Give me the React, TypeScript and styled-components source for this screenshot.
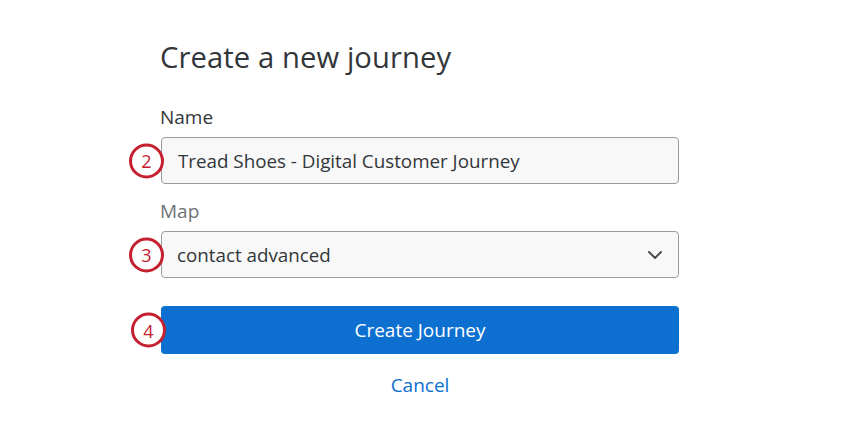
import React from "react";
import styled, { createGlobalStyle } from "styled-components";

const Global = createGlobalStyle`
  html, body { margin: 0; padding: 0; background: #fff; }
  body { font-family: "Open Sans", "Liberation Sans", sans-serif; color: #32363a; }
`;

const Page = styled.div`
  width: 850px;
  height: 425px;
  background: #fff;
  display: flex;
  justify-content: flex-start;
  padding-left: 161px;
  padding-top: 36px;
  box-sizing: border-box;
`;

const Form = styled.div`
  width: 518px;
  display: flex;
  flex-direction: column;
`;

const Title = styled.h1`
  margin: 0 0 0 -1px;
  font-size: 29.2px;
  font-weight: 400;
  line-height: 42px;
  color: #32363a;
  letter-spacing: 0.1px;
`;

const Label = styled.div<{ $muted?: boolean }>`
  font-size: 19px;
  line-height: 24px;
  color: ${(p) => (p.$muted ? "#6f7275" : "#32363a")};
  margin-top: ${(p) => (p.$muted ? "15px" : "27px")};
  margin-bottom: 8px;
  margin-left: -1px;
`;

const FieldWrap = styled.div`
  position: relative;
`;

const Badge = styled.div<{ $left: number }>`
  position: absolute;
  left: ${(p) => p.$left}px;
  top: 50%;
  transform: translateY(-50%);
  width: 35px;
  height: 35px;
  border: 3px solid #c4202f;
  border-radius: 50%;
  background: #fff;
  box-sizing: border-box;
  display: flex;
  align-items: center;
  justify-content: center;
  font-size: 18px;
  color: #c4202f;
  line-height: 1;
  z-index: 2;
`;

const Input = styled.div`
  height: 47px;
  box-sizing: border-box;
  border: 1.5px solid #9a9a9a;
  border-radius: 4px;
  background: #f8f8f8;
  display: flex;
  align-items: center;
  padding: 0 16px;
  font-size: 18.8px;
  color: #32363a;
`;

const Select = styled(Input)`
  justify-content: space-between;
  padding: 0 15px 0 15px;
`;

const Chevron = () => (
  <svg width="16" height="10" viewBox="0 0 16 10" fill="none">
    <path d="M2 2l6 6 6-6" stroke="#4a4d50" strokeWidth="2" strokeLinecap="round" strokeLinejoin="round" />
  </svg>
);

const ButtonWrap = styled(FieldWrap)`
  margin-top: 28px;
`;

const Primary = styled.button`
  width: 100%;
  height: 48px;
  border: none;
  border-radius: 4px;
  background: #0d70d0;
  color: #fff;
  font-family: inherit;
  font-size: 19px;
  padding: 0;
  cursor: pointer;
`;

const Cancel = styled.button`
  align-self: center;
  margin-top: 18px;
  border: none;
  background: none;
  font-family: inherit;
  font-size: 19px;
  color: #0b6fd0;
  padding: 0;
  cursor: pointer;
`;

export default function App() {
  return (
    <>
      <Global />
      <Page>
        <Form>
          <Title>Create a new journey</Title>
          <Label>Name</Label>
          <FieldWrap>
            <Badge $left={-32}>2</Badge>
            <Input>Tread Shoes - Digital Customer Journey</Input>
          </FieldWrap>
          <Label $muted>Map</Label>
          <FieldWrap>
            <Badge $left={-32}>3</Badge>
            <Select>
              <span>contact advanced</span>
              <Chevron />
            </Select>
          </FieldWrap>
          <ButtonWrap>
            <Badge $left={-30}>4</Badge>
            <Primary>Create Journey</Primary>
          </ButtonWrap>
          <Cancel>Cancel</Cancel>
        </Form>
      </Page>
    </>
  );
}
